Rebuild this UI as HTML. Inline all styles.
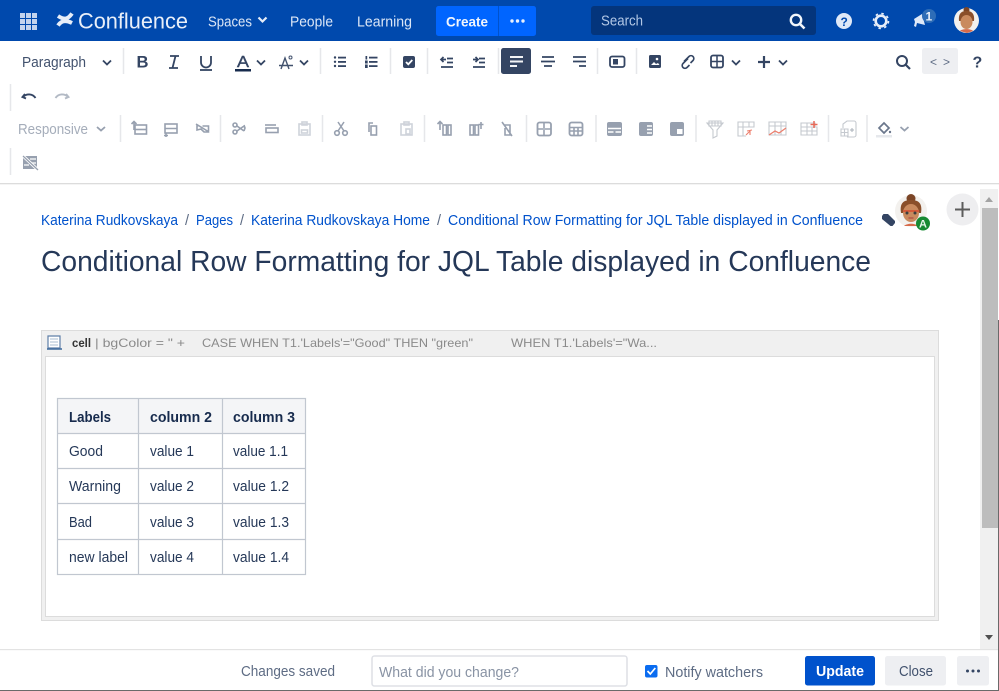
<!DOCTYPE html>
<html><head><meta charset="utf-8"><title>Confluence</title>
<style>
html,body{margin:0;padding:0;background:#fff;width:999px;height:691px;overflow:hidden}
svg{display:block;filter:blur(.25px)}
text{font-family:"Liberation Sans",sans-serif;white-space:pre}
.n{fill:#dbe6f6;font-size:14.5px}
.tb{fill:none;stroke:#344563;stroke-width:1.8}
.tf{fill:#344563}
.g{fill:none;stroke:#97a0af;stroke-width:1.6}
.gf{fill:#97a0af}
.sep{stroke:#e6e7ea;stroke-width:1.5}
.bc{fill:#0052cc;font-size:14.5px}
.c{fill:#253858;font-size:14.5px}
.h{fill:#172b4d;font-size:14.5px;font-weight:bold}
.m{fill:#8a8a8a;font-size:12px}
.f{fill:#5e6c84;font-size:14.5px}
</style></head><body>
<svg width="999" height="691" viewBox="0 0 999 691" xmlns="http://www.w3.org/2000/svg">
<rect width="999" height="691" fill="#fff"/>
<!-- NAV -->
<rect width="999" height="41" fill="#0049ad"/>
<g fill="#c3d4ee">
<rect x="20" y="13" width="5" height="5"/><rect x="26" y="13" width="5" height="5"/><rect x="32" y="13" width="5" height="5"/>
<rect x="20" y="19" width="5" height="5"/><rect x="26" y="19" width="5" height="5"/><rect x="32" y="19" width="5" height="5"/>
<rect x="20" y="25" width="5" height="5"/><rect x="26" y="25" width="5" height="5"/><rect x="32" y="25" width="5" height="5"/>
</g>
<path d="M58 25.500c3-4.500 7-6 14-2.500M58 16c7 4.500 10 3 14-2.500" fill="none" stroke="#e6edf8" stroke-width="4"/>
<text x="78" y="28.500" font-size="22" fill="#e8eff9" textLength="110" lengthAdjust="spacingAndGlyphs">Confluence</text>
<text x="208" y="26.500" class="n" textLength="44" lengthAdjust="spacingAndGlyphs">Spaces</text>
<path d="M258.500 17.500l4 4 4-4" fill="none" stroke="#e6edf8" stroke-width="2.200"/>
<text x="290" y="26.500" class="n" textLength="43" lengthAdjust="spacingAndGlyphs">People</text>
<text x="357" y="26.500" class="n" textLength="55" lengthAdjust="spacingAndGlyphs">Learning</text>
<rect x="436" y="6" width="100" height="30" rx="2.500" fill="#0065ff"/>
<rect x="498" y="6" width="1" height="30" fill="#0052cc"/>
<text x="446" y="26.500" font-size="14" font-weight="bold" fill="#f2f6fd" textLength="42" lengthAdjust="spacingAndGlyphs">Create</text>
<g fill="#e8f0fd"><circle cx="512" cy="21" r="1.700"/><circle cx="517.500" cy="21" r="1.700"/><circle cx="523" cy="21" r="1.700"/></g>
<rect x="591" y="6" width="225" height="29" rx="3" fill="#04357c"/>
<text x="601" y="25.500" font-size="14.500" fill="#b3c8e6" textLength="42" lengthAdjust="spacingAndGlyphs">Search</text>
<circle cx="796" cy="20" r="5.200" fill="none" stroke="#f2f6fb" stroke-width="2.400"/><path d="M800 24l4.500 4.500" stroke="#f2f6fb" stroke-width="2.600"/>
<circle cx="844" cy="21" r="8" fill="#dfe9f8"/>
<text x="840.500" y="26" font-size="12" font-weight="bold" fill="#0049ad">?</text>
<circle cx="881" cy="21" r="5.300" fill="none" stroke="#e6edf8" stroke-width="2.600"/>
<circle cx="881" cy="21" r="7.500" fill="none" stroke="#e6edf8" stroke-width="1.600" stroke-dasharray="2.500 3.400"/>
<path d="M914 19l8-5 3 11-8-2-1 4-2-1 1-4z" fill="#dfe9f8"/>
<circle cx="929" cy="16" r="7" fill="#2e6db7"/>
<text x="925.500" y="20.500" font-size="12" font-weight="bold" fill="#e8eff9">1</text>
<circle cx="966.500" cy="20.500" r="12.500" fill="#f3f1ee"/>
<circle cx="966.500" cy="10" r="3" fill="#7b4526"/>
<path d="M959 21c-1-9 4-10 7.500-10s8.500 1 7.500 10z" fill="#8a4f2a"/>
<ellipse cx="966.500" cy="22" rx="6" ry="7" fill="#c98a5e"/>
<path d="M960 31c2-2.500 11-2.500 13 0l-6 2z" fill="#d76a4a"/>
<!-- TOOLBAR row 1 -->
<text x="22" y="67" font-size="14.500" fill="#42526e" textLength="64" lengthAdjust="spacingAndGlyphs">Paragraph</text>
<path d="M103 60.500l4 4 4-4" class="tb"/>
<g class="sep"><path d="M123.500 48v26M320.500 48v26M390.500 48v26M427.500 48v26M498.500 48v26M597.500 48v26M636.500 48v26M10.500 84v27"/></g>
<text x="136.500" y="67.500" font-size="17" font-weight="bold" fill="#344563" textLength="12" lengthAdjust="spacingAndGlyphs">B</text>
<path d="M170 56h9M169 68h9M175.500 56l-3 12" fill="none" stroke="#344563" stroke-width="1.800"/>
<path d="M201 56v6.500a5 5 0 0 0 10 0V56" class="tb"/><path d="M200 70h12" class="tb"/>
<text x="237" y="67" font-size="16" fill="#344563" stroke="#344563" stroke-width=".4" textLength="12" lengthAdjust="spacingAndGlyphs">A</text>
<rect x="235" y="69" width="16" height="2.500" fill="#172b4d"/>
<path d="M257 60.500l4 4 4-4M300 60.500l4 4 4-4" class="tb"/>
<path d="M281 69l4-11 4 11M279 65.500h14" fill="none" stroke="#42526e" stroke-width="1.400"/><circle cx="290.500" cy="57.500" r="1.500" fill="none" stroke="#42526e"/>
<g class="tf"><circle cx="335" cy="57.500" r="1.200"/><circle cx="335" cy="61.800" r="1.200"/><circle cx="335" cy="66" r="1.200"/><rect x="338" y="56.700" width="8" height="1.800"/><rect x="338" y="61" width="8" height="1.800"/><rect x="338" y="65.200" width="8" height="1.800"/>
<rect x="365.500" y="56" width="1.700" height="3.500"/><rect x="365" y="60.500" width="2.700" height="3"/><rect x="365" y="64.500" width="2.700" height="3.500"/><rect x="369" y="56.700" width="8.500" height="1.800"/><rect x="369" y="61" width="8.500" height="1.800"/><rect x="369" y="65.200" width="8.500" height="1.800"/></g>
<rect x="403" y="56" width="12" height="12" rx="2" fill="#344563"/><path d="M406 62l2.300 2.300 4-4.300" fill="none" stroke="#fff" stroke-width="1.800"/>
<path d="M447 58.500h6M447 62.500h6M441 67h12M446 59.500h-5M443.500 57l-2.500 2.500 2.500 2.500" fill="none" stroke="#344563" stroke-width="1.700"/>
<path d="M479 58.500h6M479 62.500h6M473 67h12M473 59.500h5M475.500 57l2.500 2.500-2.500 2.500" fill="none" stroke="#344563" stroke-width="1.700"/>
<rect x="501" y="48" width="30" height="26" rx="2.500" fill="#344563"/>
<path d="M510 57h13M510 61.500h13M510 66h7" stroke="#f2f3f5" stroke-width="2"/>
<path d="M542 57h12M541 61.500h14M544 66h8" stroke="#344563" stroke-width="1.800"/>
<path d="M573 57h13M573 61.500h13M579 66h7" stroke="#344563" stroke-width="1.800"/>
<rect x="610" y="56.500" width="14.500" height="10.500" rx="2" fill="none" stroke="#344563" stroke-width="1.800"/><rect x="613" y="59" width="5" height="5.500" fill="#344563"/>
<rect x="649" y="55" width="12" height="13" rx="1.500" fill="#344563"/><circle cx="657" cy="59" r="1.300" fill="#fff"/><path d="M651 65l3-3 2 2 2-1 1.500 2z" fill="#fff"/>
<path d="M684 63l5-5a2.800 2.800 0 0 1 4 4l-2.500 2.500M688 60l-5 5a2.800 2.800 0 0 0 4 4l2.500-2.500" fill="none" stroke="#344563" stroke-width="1.600" transform="translate(0 -1.500)"/>
<rect x="711" y="55.500" width="12" height="12" rx="2" fill="none" stroke="#344563" stroke-width="1.800"/><path d="M717 55.500v12M711 61.500h12" stroke="#344563" stroke-width="1.500"/>
<path d="M732 60.500l4 4 4-4M779 60.500l4 4 4-4" class="tb"/>
<path d="M758 62h12M764 56v12" stroke="#344563" stroke-width="2.200"/>
<circle cx="902" cy="61" r="5" fill="none" stroke="#344563" stroke-width="2"/><path d="M906 65l4 4" stroke="#344563" stroke-width="2.200"/>
<rect x="922" y="48" width="36" height="26" rx="2.500" fill="#eeeff2"/>
<text x="930" y="66" font-size="12" fill="#5e6c84" textLength="20">&lt; &gt;</text>
<text x="972.500" y="67.500" font-size="16" font-weight="bold" fill="#344563">?</text>
<path d="M25 94l-2.500 3 3.500 1.500M23.500 96.500c3-3 9-3 12 1.500" fill="none" stroke="#344563" stroke-width="1.900"/>
<path d="M66 94l2.500 3-3.500 1.500M67.500 96.500c-3-3-9-3-12 1.500" fill="none" stroke="#b3bac5" stroke-width="1.900"/>
<!-- TOOLBAR row 3 -->
<text x="18" y="134" font-size="14.500" fill="#a5adba" textLength="70" lengthAdjust="spacingAndGlyphs">Responsive</text>
<path d="M97 127l4 3.500 4-3.500" fill="none" stroke="#97a0af" stroke-width="1.800"/>
<g class="sep"><path d="M120.500 115v27M220.500 115v27M322.500 115v27M424.500 115v27M526.500 115v27M596 115v27M696 115v27M828.500 115v27M867 115v27M10.500 148v27"/></g>
<g class="g">
<path d="M134 122v8M131.500 124l2.500-2.500 2.500 2.500"/><rect x="135" y="125" width="11.500" height="9"/><path d="M135 129.500h11.500"/>
<rect x="165" y="124" width="12" height="9"/><path d="M165 128.500h12M166 133v4M164 135.500h4"/>
<path d="M196 124l13 8M197 125v5l4-1 3 3h4.500v-6h-6"/>
<circle cx="235" cy="125" r="2"/><circle cx="235" cy="132" r="2"/><path d="M237 126l7 5M237 131l7-5M244 125l1 3-1 3"/>
<path d="M265 125h11"/><rect x="266" y="128" width="12" height="4.500"/>
<rect x="299" y="124" width="11" height="11" stroke="#cfd3da"/><rect x="302" y="122" width="5" height="3" stroke="#cfd3da"/><rect x="301.500" y="130" width="6" height="3" stroke="#cfd3da"/>
<circle cx="337" cy="133" r="2.300"/><circle cx="345" cy="133" r="2.300"/><path d="M338 131l6-9M344 131l-6-9" stroke-width="1.500"/>
<rect x="371" y="126" width="5.500" height="9"/><path d="M369 132v-9h4"/>
<rect x="401" y="124" width="11" height="11" stroke="#cfd3da"/><rect x="404" y="122" width="5" height="3" stroke="#cfd3da"/><rect x="406" y="129" width="4" height="5" stroke="#cfd3da"/>
<path d="M440 122v8M437.500 124l2.500-2.500 2.500 2.500"/><rect x="443" y="125" width="3.500" height="10"/><rect x="448" y="125" width="3" height="10"/>
<rect x="470" y="125" width="3.500" height="10"/><rect x="475" y="125" width="3.500" height="10"/><path d="M481 122v7M478.500 124.500h5"/>
<path d="M502 122l10 14M504 125h6v10h-5v-7"/>
<rect x="537.500" y="122.500" width="13.500" height="13" rx="2" stroke-width="1.800"/><path d="M537.500 129h13.500M544 123v5M544 130v5"/>
<rect x="569.500" y="122.500" width="13" height="13" rx="2" stroke-width="1.800"/><path d="M570 127.500h12M570 131h12M574 127.500v8M578 127.500v8"/>
</g>
<g class="gf">
<rect x="607" y="122" width="15" height="14" rx="2"/>
<rect x="639" y="122" width="14" height="14" rx="2"/>
<rect x="670" y="122" width="14" height="14" rx="2"/>
</g>
<path d="M608 128.500h13M608 132h5.500M615.500 132h5.500" stroke="#fff" stroke-width="1.400"/>
<path d="M647 126h5M647 129.500h5M647 133h5" stroke="#fff" stroke-width="1.500"/>
<rect x="677" y="129" width="5.500" height="5" fill="#fff"/>
<g fill="none" stroke="#c5c9cf" stroke-width="1.100">
<path d="M707 123h16l-6 7v6l-4 2v-8z"/><path d="M709 121h12v5h-12zM712 121v5M715 121v5M718 121v5"/>
<path d="M738 122h16v5h-16zM738 127v9h8M743 122v14M749 122v5"/>
<path d="M769 122h17v13h-17zM769 126h17M775 122v13M781 122v13"/>
<path d="M801 123h14v4h-14zM801 127h16v8h-16zM801 131h16M807 123v12M812 127v8"/>
<path d="M843 128v-4l4-3h7a2 2 0 0 1 2 2v12a2 2 0 0 1-2 2h-7"/><path d="M841 129h7v7h-7zM841 132.500h7M844.500 129v7"/>
</g>
<path d="M746 135l4-4M750 135v-5M747 131l5-1" fill="none" stroke="#ec7e6c" stroke-width="1.100"/>
<path d="M769 135l6-4 4 2 7-5" fill="none" stroke="#ec7e6c" stroke-width="1.200"/>
<path d="M814 121v7M810.500 124.500h7" stroke="#e86a58" stroke-width="1.500"/>
<path d="M850 130h4M852 128v4" stroke="#aab0ba"/>
<path d="M879 128l5-5 5 5-5 5z" fill="none" stroke="#6b778c" stroke-width="1.700"/><circle cx="890" cy="132" r="1.200" fill="#6b778c"/>
<rect x="876" y="135" width="16" height="2.500" fill="#e6e8ec"/>
<path d="M900.500 127l4 3.500 4-3.500" fill="none" stroke="#97a0af" stroke-width="1.800"/>
<path d="M23 156h14v13H23z" fill="#97a0af"/><path d="M30 159h6M30 163h6M24 165h5" stroke="#fff" stroke-width="1.200"/><path d="M22 155l16 15" stroke="#fff" stroke-width="3"/><path d="M23 156l15 14" stroke="#97a0af" stroke-width="1.300"/>
<rect x="0" y="183" width="999" height="1.300" fill="#dcdcdc"/>
<!-- BREADCRUMB -->
<text x="41" y="225" class="bc" textLength="137" lengthAdjust="spacingAndGlyphs">Katerina Rudkovskaya</text>
<text x="185" y="225" font-size="14.500" fill="#5e6c84">/</text>
<text x="196" y="225" class="bc" textLength="37" lengthAdjust="spacingAndGlyphs">Pages</text>
<text x="240" y="225" font-size="14.500" fill="#5e6c84">/</text>
<text x="251" y="225" class="bc" textLength="179" lengthAdjust="spacingAndGlyphs">Katerina Rudkovskaya Home</text>
<text x="437" y="225" font-size="14.500" fill="#5e6c84">/</text>
<text x="448" y="225" class="bc" textLength="415" lengthAdjust="spacingAndGlyphs">Conditional Row Formatting for JQL Table displayed in Confluence</text>
<path d="M882 216l1.500-2h4.500l7 7v2l-2.500 3h-2l-8.500-7z" fill="#344563"/>
<!-- avatar -->
<circle cx="911" cy="211" r="16" fill="#f3f1ee"/>
<circle cx="911" cy="198.500" r="4.500" fill="#7b4526"/>
<path d="M901 213c-2-12 5-13 10-13s12 1 10 13z" fill="#8a4f2a"/>
<ellipse cx="911" cy="213" rx="8" ry="9" fill="#c98a5e"/>
<path d="M903 211h16" stroke="#d35a3a" stroke-width="2"/>
<circle cx="907" cy="213" r="1.500" fill="#3d3d3d"/><circle cx="915" cy="213" r="1.500" fill="#3d3d3d"/>
<path d="M908.500 218h5" stroke="#a83c3c"/>
<path d="M904 226c3-3 11-3 14 0z" fill="#d76a4a"/>
<circle cx="923" cy="223.500" r="7" fill="#178a32"/>
<text x="919" y="227.500" font-size="11" font-weight="bold" fill="#e8f6eb">A</text>
<circle cx="962.500" cy="209.500" r="16" fill="#eeeef0"/>
<path d="M955 209.500h15M962.500 202v15" stroke="#5c5c5c" stroke-width="2"/>
<!-- TITLE -->
<text x="41" y="271" font-size="29" fill="#253858" textLength="830" lengthAdjust="spacingAndGlyphs">Conditional Row Formatting for JQL Table displayed in Confluence</text>
<!-- MACRO -->
<rect x="41.500" y="330.500" width="897" height="290" fill="#f0f0f0" stroke="#dcdcdc"/>
<rect x="45.500" y="356.500" width="889" height="260" fill="#fff" stroke="#dcdcdc"/>
<path d="M48 336h12v12H48z" fill="#fff" stroke="#5f7fa8" stroke-width="1.200"/><path d="M47 349h15" stroke="#46709f" stroke-width="1.600"/><path d="M50 339h8M50 342h8M50 345h8" stroke="#a9bcd2"/>
<text x="72" y="347" font-size="12" font-weight="bold" fill="#333" textLength="19" lengthAdjust="spacingAndGlyphs">cell</text>
<text x="95" y="347" class="m" textLength="90" lengthAdjust="spacingAndGlyphs">| bgColor = " +</text>
<text x="202" y="347" class="m" textLength="271" lengthAdjust="spacingAndGlyphs">CASE WHEN T1.'Labels'="Good" THEN "green"</text>
<text x="511" y="347" class="m" textLength="146" lengthAdjust="spacingAndGlyphs">WHEN T1.'Labels'="Wa...</text>
<!-- TABLE -->
<rect x="57.500" y="398.500" width="248" height="35" fill="#f4f5f7"/>
<g stroke="#c1c7d0" stroke-width="1.200" fill="none">
<rect x="57.500" y="398.500" width="248" height="176"/>
<path d="M138.500 398.500v176M222.500 398.500v176M57.500 433.500h248M57.500 468.500h248M57.500 503.500h248M57.500 539.500h248"/>
</g>
<text x="69" y="422" class="h" textLength="42" lengthAdjust="spacingAndGlyphs">Labels</text>
<text x="150" y="422" class="h" textLength="62" lengthAdjust="spacingAndGlyphs">column 2</text>
<text x="233" y="422" class="h" textLength="62" lengthAdjust="spacingAndGlyphs">column 3</text>
<text x="69" y="456" class="c" textLength="34" lengthAdjust="spacingAndGlyphs">Good</text>
<text x="150" y="456" class="c" textLength="44" lengthAdjust="spacingAndGlyphs">value 1</text>
<text x="233" y="456" class="c" textLength="55" lengthAdjust="spacingAndGlyphs">value 1.1</text>
<text x="69" y="491" class="c" textLength="52" lengthAdjust="spacingAndGlyphs">Warning</text>
<text x="150" y="491" class="c" textLength="44" lengthAdjust="spacingAndGlyphs">value 2</text>
<text x="233" y="491" class="c" textLength="56" lengthAdjust="spacingAndGlyphs">value 1.2</text>
<text x="69" y="527" class="c" textLength="23" lengthAdjust="spacingAndGlyphs">Bad</text>
<text x="150" y="527" class="c" textLength="44" lengthAdjust="spacingAndGlyphs">value 3</text>
<text x="233" y="527" class="c" textLength="56" lengthAdjust="spacingAndGlyphs">value 1.3</text>
<text x="69" y="562" class="c" textLength="59" lengthAdjust="spacingAndGlyphs">new label</text>
<text x="150" y="562" class="c" textLength="44" lengthAdjust="spacingAndGlyphs">value 4</text>
<text x="233" y="562" class="c" textLength="56" lengthAdjust="spacingAndGlyphs">value 1.4</text>
<!-- SCROLLBAR -->
<rect x="980" y="189" width="18" height="460" fill="#f0f0f0"/>
<rect x="982" y="208" width="16" height="320" fill="#bdbdbd"/>
<path d="M985 202l4-5 4 5z" fill="#a3a3a3"/>
<path d="M985 635h8l-4 5z" fill="#505050"/>
<!-- FOOTER -->
<rect x="0" y="649" width="999" height="1.200" fill="#e3e3e3"/>
<text x="241" y="676" class="f" textLength="94" lengthAdjust="spacingAndGlyphs">Changes saved</text>
<rect x="372" y="656" width="255" height="30" rx="2.500" fill="#fff" stroke="#dfe1e6" stroke-width="1.600"/>
<text x="379" y="677" font-size="14.500" fill="#8993a4" textLength="140" lengthAdjust="spacingAndGlyphs">What did you change?</text>
<rect x="645" y="665" width="12.500" height="12.500" rx="2" fill="#0a6cf0"/>
<path d="M647.500 671l2.800 3 5-6" fill="none" stroke="#fff" stroke-width="1.700"/>
<text x="665" y="677" class="f" textLength="98" lengthAdjust="spacingAndGlyphs">Notify watchers</text>
<rect x="805" y="656" width="70" height="29.500" rx="2.500" fill="#0052cc"/>
<text x="816" y="676" font-size="14.500" font-weight="bold" fill="#fff" textLength="48" lengthAdjust="spacingAndGlyphs">Update</text>
<rect x="885" y="656" width="61" height="29.500" rx="2.500" fill="#eeeff2"/>
<text x="899" y="676" font-size="14.500" fill="#42526e" textLength="34" lengthAdjust="spacingAndGlyphs">Close</text>
<rect x="957" y="656" width="32" height="29.500" rx="2.500" fill="#eeeff2"/>
<g fill="#344563"><circle cx="967.500" cy="671" r="1.500"/><circle cx="973" cy="671" r="1.500"/><circle cx="978.500" cy="671" r="1.500"/></g>
<!-- window edge -->
<rect x="0" y="690" width="999" height="1" fill="#6a6a6a"/>
<rect x="998" y="320" width="1" height="371" fill="#6a6a6a"/>
</svg>
</body></html>
